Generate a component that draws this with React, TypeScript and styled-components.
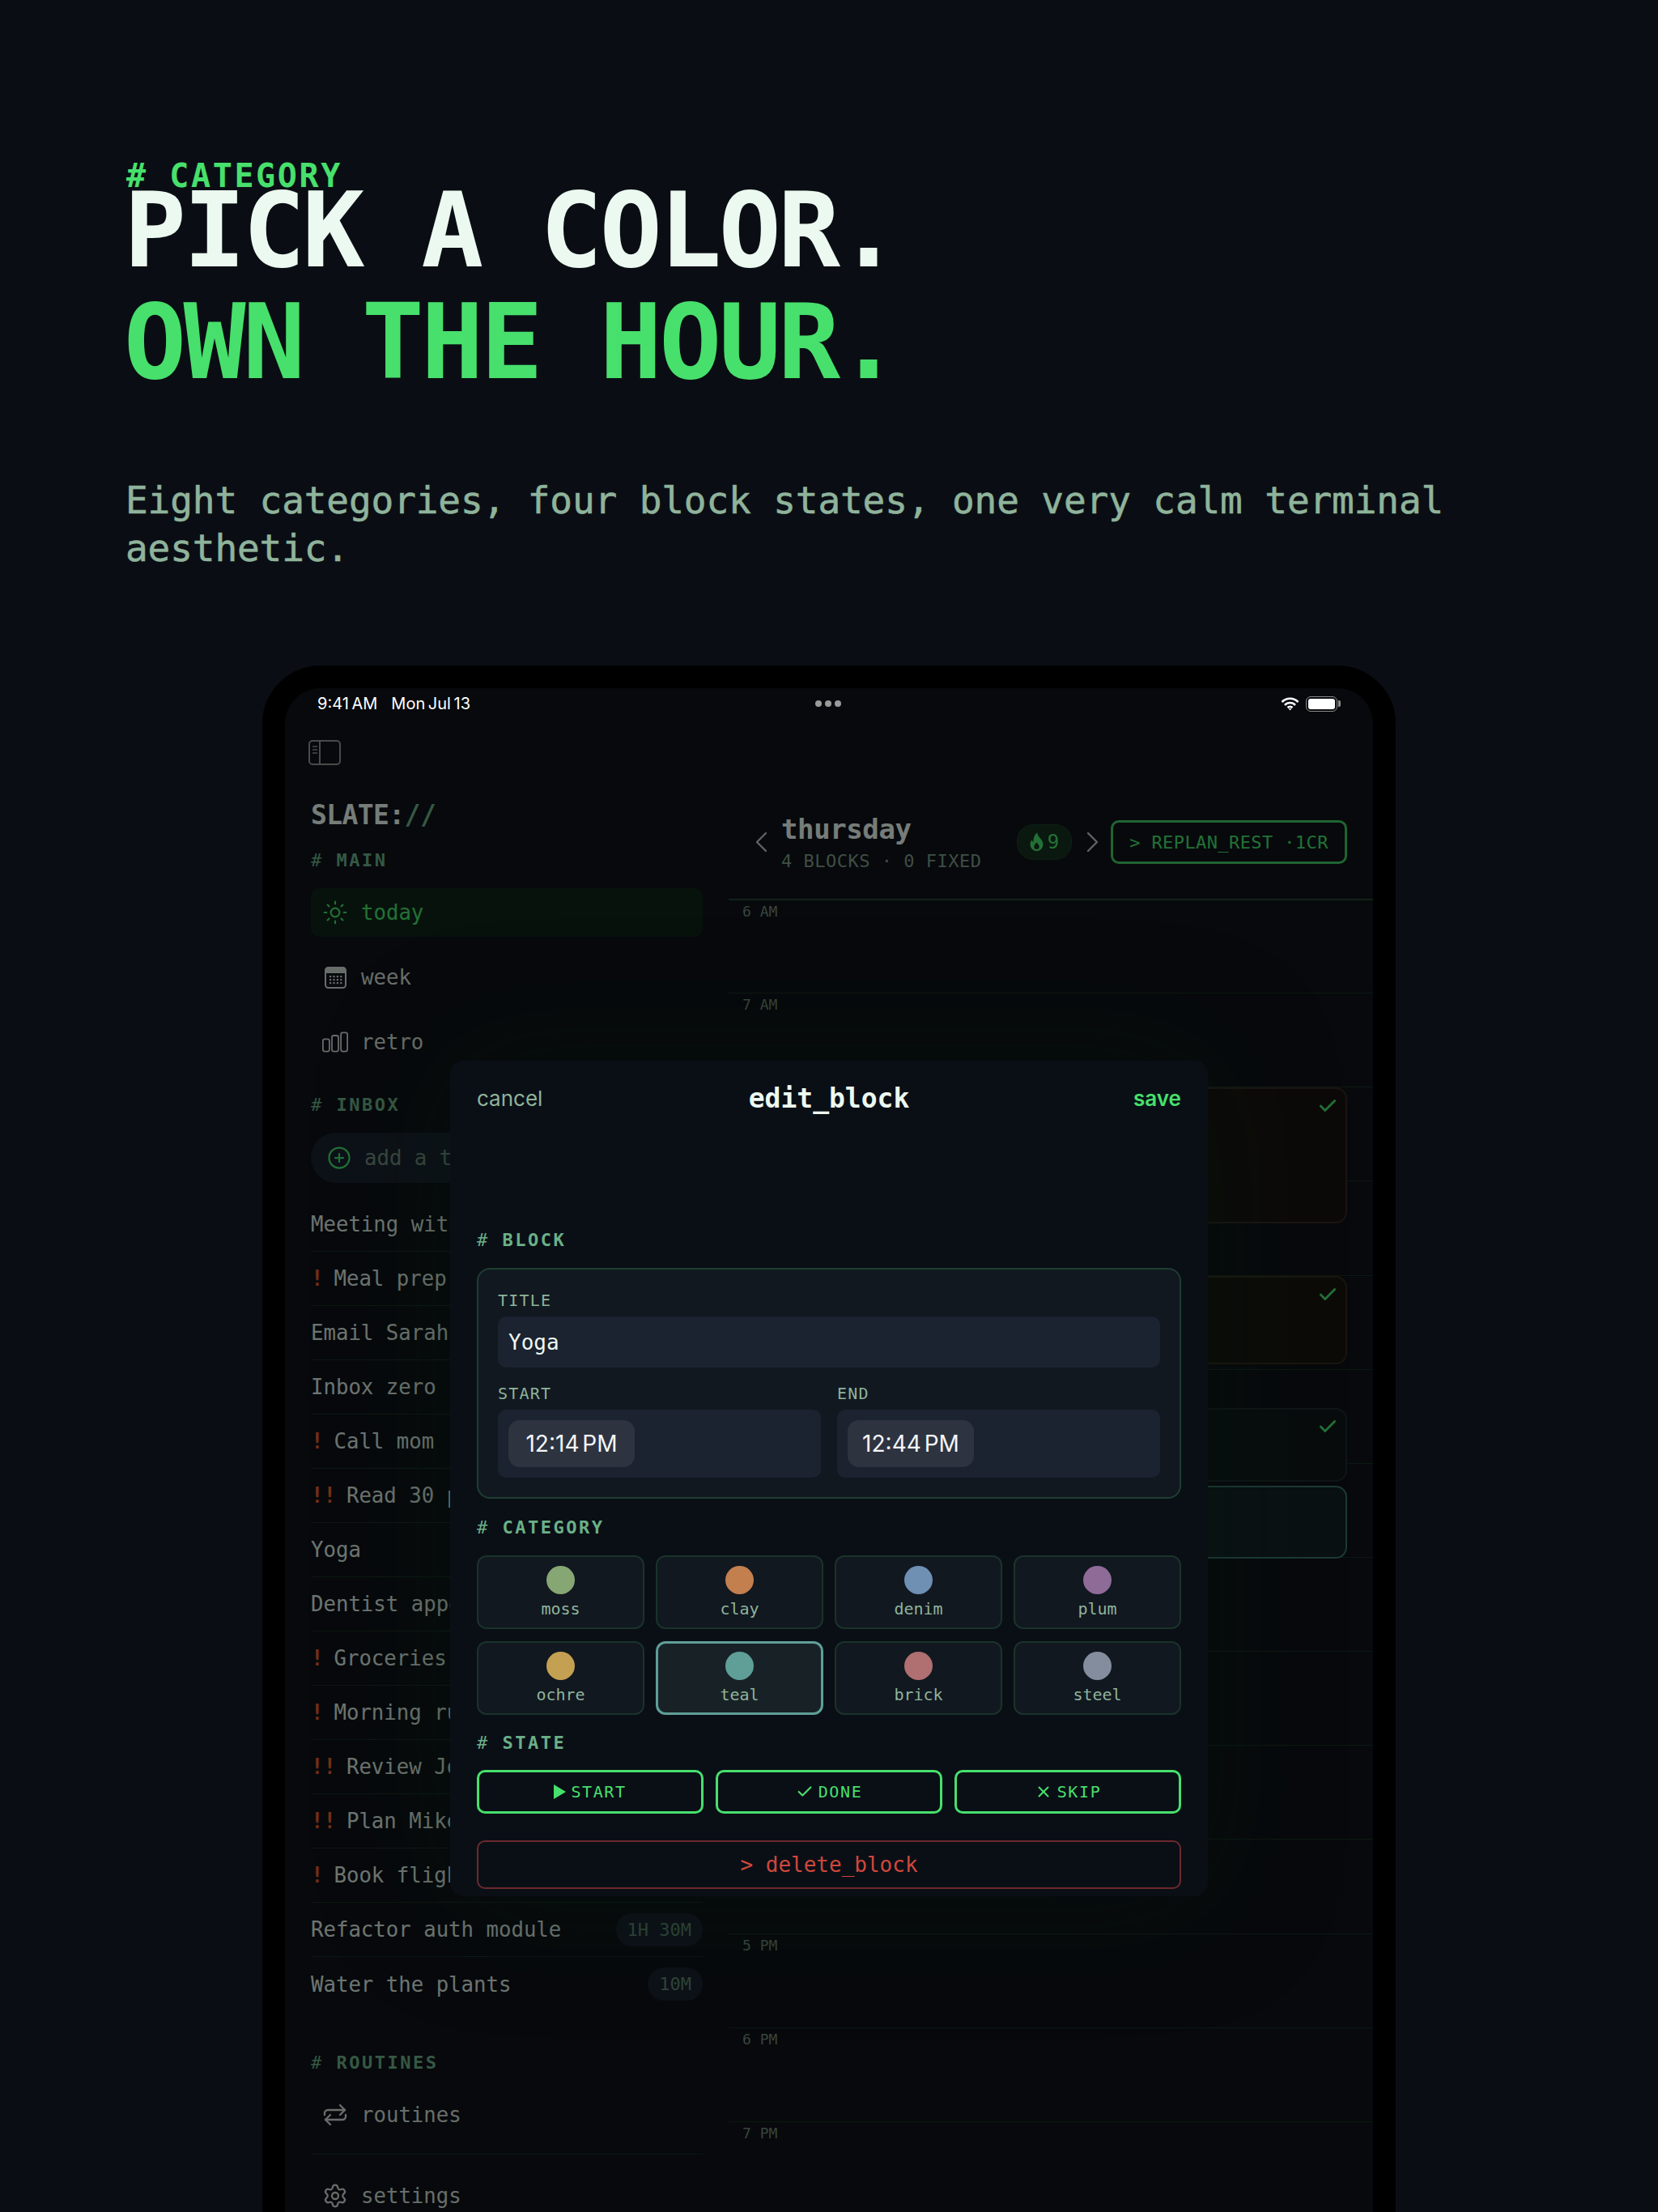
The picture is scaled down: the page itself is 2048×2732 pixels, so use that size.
import styled, { createGlobalStyle } from 'styled-components';
import { Check, CirclePlus, Settings, Sun, X } from 'lucide-react';

const MONO = '"DejaVu Sans Mono", "Liberation Mono", monospace';
const SANS = 'Inter, "Noto Sans", sans-serif';

const GlobalStyle = createGlobalStyle`
  html, body {
    margin: 0;
    background: #0a0e14;
  }
  * {
    box-sizing: border-box;
  }
`;

const Page = styled.div`
  height: 2732px;
  overflow: hidden;
  background: #0a0e14;
  font-family: ${MONO};
  padding-top: 197px;
`;

const Hero = styled.header`
  padding: 0 156px;
`;

const Eyebrow = styled.div`
  font-size: 40px;
  line-height: 40px;
  font-weight: 700;
  letter-spacing: 2.6px;
  color: #47e06c;
`;

const Headline = styled.h1`
  margin: -21px 0 0 -3px;
  font-size: 128px;
  line-height: 138px;
  font-weight: 700;
  letter-spacing: -3.6px;
  color: #ecf9f0;
`;

const HeadlineAccent = styled.span`
  display: block;
  color: #47e06c;
`;

const Lead = styled.p`
  margin: 97px 0 0 -1px;
  font-size: 46px;
  line-height: 59px;
  letter-spacing: -0.1px;
  -webkit-text-stroke: 0.6px #8fb39b;
  color: #8fb39b;
`;

const Device = styled.div`
  width: 1400px;
  height: 2000px;
  margin: 115px auto 0;
  border: 28px solid #000;
  border-radius: 72px;
  background: #000;
`;

const Screen = styled.div`
  position: relative;
  height: 100%;
  border-radius: 44px;
  overflow: hidden;
  background: #0e1219;
`;

const StatusBar = styled.div`
  position: relative;
  z-index: 3;
  display: grid;
  grid-template-columns: 1fr auto 1fr;
  align-items: center;
  height: 38px;
  padding: 0 44px 0 40px;
  font-family: ${SANS};
  font-size: 20px;
  font-weight: 400;
  word-spacing: -2px;
  color: #fff;
`;

const StatusLeft = styled.div`
  display: flex;
  gap: 17px;
`;

const StatusDots = styled.div`
  display: flex;
  gap: 4px;
  margin-left: 2px;
`;

const StatusDot = styled.span`
  width: 8px;
  height: 8px;
  border-radius: 50%;
  background: #9a9a9a;
`;

const StatusRight = styled.div`
  display: flex;
  justify-content: flex-end;
  align-items: center;
  gap: 8px;
`;

const Battery = styled.div`
  position: relative;
  width: 39px;
  height: 19px;
  padding: 2px;
  border: 1.5px solid #8a8a8a;
  border-radius: 6px;

  &::before {
    content: '';
    display: block;
    height: 100%;
    border-radius: 3px;
    background: #fff;
  }

  &::after {
    content: '';
    position: absolute;
    top: 4px;
    right: -5px;
    width: 3px;
    height: 8px;
    border-radius: 0 2px 2px 0;
    background: #8a8a8a;
  }
`;

const Body = styled.div`
  display: grid;
  grid-template-columns: 548px 1fr;
`;

const Sidebar = styled.aside`
  padding: 26px 32px 0;
`;

const ToggleIcon = styled.svg`
  display: block;
  width: 40px;
  height: 31px;
  margin-left: -3px;
`;

const Logo = styled.div`
  margin-top: 42px;
  font-size: 33px;
  line-height: 40px;
  font-weight: 700;
  letter-spacing: -0.6px;
  color: #ecf9f0;
`;

const LogoSlash = styled.span`
  color: #6bb088;
`;

const SectionLabel = styled.div<{ $top: number }>`
  margin-top: ${(p) => p.$top}px;
  font-size: 22px;
  line-height: 28px;
  font-weight: 700;
  letter-spacing: 2.5px;
  color: #6bb088;
`;

const Hash = styled.span`
  font-weight: 400;
`;

const NavList = styled.nav`
  display: flex;
  flex-direction: column;
  gap: 20px;
  margin-top: 20px;
`;

const NavItem = styled.div<{ $active?: boolean }>`
  display: flex;
  align-items: center;
  gap: 16px;
  height: 60px;
  padding-left: 14px;
  border-radius: 10px;
  font-size: 25.7px;
  color: ${(p) => (p.$active ? '#47e06c' : '#cfdcd3')};
  background: ${(p) => (p.$active ? '#0f2418' : 'transparent')};
`;

const NavIcon = styled.span`
  display: flex;
  justify-content: center;
  width: 32px;
  color: inherit;
`;

const AddTask = styled.div`
  display: flex;
  align-items: center;
  gap: 16px;
  height: 62px;
  margin-top: 20px;
  padding-left: 20px;
  border-radius: 31px;
  background: #1a2230;
  font-size: 25.7px;
  color: #74907f;
`;

const TaskList = styled.ul`
  margin: 18px 0 0;
  padding: 0;
  list-style: none;
`;

const TaskRow = styled.li`
  display: flex;
  align-items: center;
  justify-content: space-between;
  height: 67px;
  border-bottom: 1px solid #1a3325;
  font-size: 25.7px;
  color: #dcebe2;
  white-space: nowrap;

  &:last-child {
    border-bottom: none;
  }
`;

const TaskName = styled.span`
  display: flex;
  gap: 13px;
`;

const Flag = styled.span`
  font-weight: 700;
  color: #e4622f;
`;

const Duration = styled.span`
  padding: 0 14px;
  height: 41px;
  line-height: 41px;
  border-radius: 20px;
  background: #1a2230;
  font-size: 22px;
  color: #5f8a70;
`;

const SidebarRule = styled.div`
  height: 1px;
  margin: 18px 0 21px;
  background: #1a3325;
`;

const Main = styled.main`
  display: flex;
  flex-direction: column;
`;

const DayHeader = styled.div`
  display: flex;
  align-items: center;
  height: 222px;
  padding: 125px 32px 43px 30px;
`;

const Chevron = styled.svg`
  flex: none;
  width: 20px;
  height: 28px;
  color: #bcc9c0;
`;

const DayTitle = styled.div`
  flex: 1;
  margin-left: 15px;
`;

const DayName = styled.div`
  font-size: 34px;
  line-height: 44px;
  font-weight: 700;
  letter-spacing: -0.4px;
  color: #ecf9f0;
`;

const DayMeta = styled.div`
  margin-top: 3px;
  font-size: 22px;
  line-height: 30px;
  letter-spacing: 0.5px;
  color: #7e9c89;
`;

const Streak = styled.div`
  display: flex;
  align-items: center;
  justify-content: center;
  gap: 5px;
  width: 68px;
  height: 44px;
  margin-right: 16px;
  border: 1px solid #1c3f2a;
  border-radius: 20px;
  background: #14301f;
  font-size: 24px;
  color: #47e06c;
`;

const ReplanButton = styled.button`
  width: 292px;
  height: 54px;
  margin-left: 12px;
  padding: 0;
  border: 3px solid #3fc962;
  border-radius: 10px;
  background: none;
  font-family: ${MONO};
  font-size: 22px;
  letter-spacing: 0.4px;
  color: #47e06c;
`;

const Timeline = styled.div`
  position: relative;
`;

const HourRow = styled.div<{ $first?: boolean }>`
  height: 116.15px;
  padding: 3px 0 0 17px;
  border-top: ${(p) => (p.$first ? '2px solid #23442f' : '1px solid #1a3325')};
  font-size: 18px;
  line-height: 22px;
  color: #6f8a78;
`;

const Block = styled.div<{ $top: number; $height: number; $tone: string; $edge: string }>`
  position: absolute;
  top: ${(p) => p.$top}px;
  left: 60px;
  right: 32px;
  height: ${(p) => p.$height}px;
  display: flex;
  justify-content: flex-end;
  padding: 8px 9px;
  border: 2px solid ${(p) => p.$edge};
  border-radius: 14px;
  background: ${(p) => p.$tone};
  color: #47e06c;
`;

const Scrim = styled.div`
  position: absolute;
  inset: 0;
  z-index: 1;
  background: rgba(0, 0, 0, 0.5);
`;

const Sheet = styled.section`
  position: absolute;
  z-index: 2;
  top: 460px;
  left: 204px;
  width: 936px;
  height: 1032px;
  padding: 0 33px;
  border-radius: 16px;
  background: #0a0f16;
  box-shadow: 0 0 160px rgba(6, 30, 12, 0.35);
`;

const SheetHeader = styled.div`
  display: grid;
  grid-template-columns: 1fr auto 1fr;
  align-items: center;
  height: 92px;
  font-family: ${SANS};
  font-size: 26px;
`;

const SheetCancel = styled.span`
  color: #8fb39b;
`;

const SheetTitle = styled.span`
  font-family: ${MONO};
  font-size: 33px;
  font-weight: 700;
  color: #ecf9f0;
`;

const SheetSave = styled.span`
  justify-self: end;
  font-weight: 600;
  color: #47e06c;
`;

const FormCard = styled.div`
  margin-top: 20px;
  padding: 25px 24px 24px;
  border: 2px solid #1f3d30;
  border-radius: 16px;
  background: #111820;
`;

const FieldLabel = styled.div`
  font-size: 20px;
  line-height: 26px;
  letter-spacing: 1.2px;
  color: #8fb39b;
`;

const TitleInput = styled.div`
  display: flex;
  align-items: center;
  height: 63px;
  margin: 7px 0 19px;
  padding-left: 13px;
  border-radius: 10px;
  background: #1b2230;
  font-size: 26px;
  color: #ecf9f0;
`;

const TimeFields = styled.div`
  display: grid;
  grid-template-columns: 1fr 1fr;
  gap: 20px;
`;

const TimeBox = styled.div`
  display: flex;
  align-items: center;
  height: 84px;
  margin-top: 7px;
  padding-left: 13px;
  border-radius: 10px;
  background: #1b2230;
`;

const TimePill = styled.div`
  display: flex;
  align-items: center;
  justify-content: center;
  width: 156px;
  height: 58px;
  border-radius: 14px;
  background: #2e3340;
  font-family: ${SANS};
  font-size: 28px;
  word-spacing: -4px;
  color: #f4f6f8;
`;

const CategoryGrid = styled.div`
  display: grid;
  grid-template-columns: repeat(4, 1fr);
  gap: 15px 14px;
  margin-top: 20px;
`;

const CategoryTile = styled.div<{ $selected?: boolean; $ring: string }>`
  display: flex;
  flex-direction: column;
  align-items: center;
  height: 91px;
  padding-top: ${(p) => (p.$selected ? 10 : 11)}px;
  border: ${(p) => (p.$selected ? `3px solid ${p.$ring}` : '2px solid #1a3329')};
  border-radius: 12px;
  background: ${(p) => (p.$selected ? '#182226' : '#111820')};
`;

const CategoryDot = styled.span<{ $color: string }>`
  width: 35px;
  height: 35px;
  border-radius: 50%;
  background: ${(p) => p.$color};
`;

const CategoryName = styled.span`
  margin-top: 5px;
  font-size: 20px;
  line-height: 26px;
  color: #8fb39b;
`;

const StateRow = styled.div`
  display: grid;
  grid-template-columns: repeat(3, 1fr);
  gap: 15px;
  margin-top: 19px;
`;

const StateButton = styled.button`
  display: flex;
  align-items: center;
  justify-content: center;
  gap: 6px;
  height: 54px;
  padding: 0;
  border: 3px solid #47e06c;
  border-radius: 10px;
  background: none;
  font-family: ${MONO};
  font-size: 20px;
  letter-spacing: 1.6px;
  color: #47e06c;
`;

const DeleteButton = styled.button`
  display: block;
  width: 100%;
  height: 60px;
  margin-top: 33px;
  padding: 0;
  border: 2px solid #6b2a2c;
  border-radius: 10px;
  background: none;
  font-family: ${MONO};
  font-size: 26px;
  color: #d0473c;
`;

const tasks: { name: string; flag?: string; time?: string }[] = [
  { name: 'Meeting with Jordan' },
  { name: 'Meal prep', flag: '!' },
  { name: 'Email Sarah' },
  { name: 'Inbox zero' },
  { name: 'Call mom', flag: '!' },
  { name: 'Read 30 pages', flag: '!!' },
  { name: 'Yoga' },
  { name: 'Dentist appointment' },
  { name: 'Groceries', flag: '!' },
  { name: 'Morning run', flag: '!' },
  { name: 'Review Jordan', flag: '!!' },
  { name: 'Plan Mike party', flag: '!!' },
  { name: 'Book flights', flag: '!' },
  { name: 'Refactor auth module', time: '1H 30M' },
  { name: 'Water the plants', time: '10M' },
];

const hours = [
  '6 AM', '7 AM', '8 AM', '9 AM', '10 AM', '11 AM', '12 PM', '1 PM',
  '2 PM', '3 PM', '4 PM', '5 PM', '6 PM', '7 PM',
];

const categories = [
  { name: 'moss', color: '#86a673' },
  { name: 'clay', color: '#c47f4f' },
  { name: 'denim', color: '#6f8fb3' },
  { name: 'plum', color: '#8f6b98' },
  { name: 'ochre', color: '#c4a052' },
  { name: 'teal', color: '#5f9f98', selected: true },
  { name: 'brick', color: '#b06f70' },
  { name: 'steel', color: '#848d9e' },
];

const blocks = [
  { top: 233, height: 168, tone: '#181513', edge: '#342a22', done: true },
  { top: 466, height: 109, tone: '#181611', edge: '#362d1e', done: true },
  { top: 629, height: 91, tone: '#11181b', edge: '#202b2e', done: true },
  { top: 725, height: 90, tone: '#142226', edge: '#38746c', done: false },
];

const WeekIcon = () => (
  <svg width="27" height="27" viewBox="0 0 27 27">
    <rect x="1" y="1" width="25" height="25" rx="3.5" fill="none" stroke="#cfdcd3" strokeWidth="2" />
    <path d="M1 5a4 4 0 0 1 4-4h17a4 4 0 0 1 4 4v3H1z" fill="#cfdcd3" />
    {[0, 1, 2, 3].map((c) =>
      [0, 1, 2].map((r) => (
        <rect key={`${c}${r}`} x={6 + c * 4.4} y={11 + r * 4} width="2.2" height="2.2" fill="#cfdcd3" />
      )),
    )}
  </svg>
);

const RetroIcon = () => (
  <svg width="36" height="28" viewBox="0 0 36 28" fill="none" stroke="#cfdcd3" strokeWidth="2">
    <rect x="1" y="10" width="9" height="17" rx="2.5" />
    <rect x="13.5" y="5" width="9" height="22" rx="2.5" />
    <rect x="26" y="1" width="9" height="26" rx="2.5" />
  </svg>
);

const RoutinesIcon = () => (
  <svg width="30" height="28" viewBox="0 0 30 28" fill="none" stroke="#cfdcd3" strokeWidth="2.4" strokeLinecap="round" strokeLinejoin="round">
    <path d="M2 14v-2a4 4 0 0 1 4-4h21" />
    <path d="M21 2l6 6-6 6" />
    <path d="M28 14v2a4 4 0 0 1-4 4H3" />
    <path d="M9 26l-6-6 6-6" />
  </svg>
);

const FlameIcon = () => (
  <svg width="17" height="24" viewBox="0 0 16 22">
    <path
      fillRule="evenodd"
      d="M8.5 0c.6 3.2 2.2 4.9 4 7 1.600 1.900 3 3.900 3 7a7.500 7.500 0 0 1-15 0c0-2.300.9-4 2-5.500.3 1.300.9 2.100 1.800 2.700C3.800 7.300 5.200 3 8.500 0zM8 11.500c-1.800 1.800-3 3.200-3 4.900a3 3 0 0 0 6 0c0-1.700-1.300-3.100-3-4.900z"
      fill="currentColor"
    />
  </svg>
);

const ChevronLeft = () => (
  <Chevron viewBox="0 0 20 28" fill="none" stroke="currentColor" strokeWidth="2.4" strokeLinecap="round" strokeLinejoin="round">
    <path d="M16 3L5 14l11 11" />
  </Chevron>
);

const ChevronRight = () => (
  <Chevron viewBox="0 0 20 28" fill="none" stroke="currentColor" strokeWidth="2.4" strokeLinecap="round" strokeLinejoin="round">
    <path d="M4 3l11 11L4 25" />
  </Chevron>
);

const Section = ({ children, top }: { children: string; top: number }) => (
  <SectionLabel $top={top}>
    <Hash># </Hash>
    {children}
  </SectionLabel>
);

const App = () => (
  <Page>
    <GlobalStyle />
    <Hero>
      <Eyebrow># CATEGORY</Eyebrow>
      <Headline>
        PICK A COLOR.
        <HeadlineAccent>OWN THE HOUR.</HeadlineAccent>
      </Headline>
      <Lead>Eight categories, four block states, one very calm terminal aesthetic.</Lead>
    </Hero>

    <Device>
      <Screen>
        <StatusBar>
          <StatusLeft>
            <span>9:41 AM</span>
            <span>Mon Jul 13</span>
          </StatusLeft>
          <StatusDots>
            <StatusDot />
            <StatusDot />
            <StatusDot />
          </StatusDots>
          <StatusRight>
            <svg width="23" height="17" viewBox="0 0 23 17" fill="none" stroke="#fff" strokeWidth="2.6">
              <path d="M1.500 6a14 14 0 0 1 20 0" />
              <path d="M5 9.800a9 9 0 0 1 13 0" />
              <path d="M8.500 13a4.300 4.300 0 0 1 6 0" />
              <path d="M9.500 14l2 2.500 2-2.500z" fill="#fff" strokeWidth="0" />
            </svg>
            <Battery />
          </StatusRight>
        </StatusBar>

        <Body>
          <Sidebar>
            <ToggleIcon viewBox="0 0 40 31" fill="none" stroke="#8d9993" strokeWidth="2">
              <rect x="1" y="1" width="38" height="29" rx="4" />
              <path d="M14 1v29" />
              <path d="M5 8h6M5 12h6M5 16h6" strokeWidth="1.500" />
            </ToggleIcon>
            <Logo>
              SLATE:<LogoSlash>//</LogoSlash>
            </Logo>
            <Section top={22}>MAIN</Section>
            <NavList>
              <NavItem $active>
                <NavIcon>
                  <Sun size={32} strokeWidth={1.6} />
                </NavIcon>
                today
              </NavItem>
              <NavItem>
                <NavIcon>
                  <WeekIcon />
                </NavIcon>
                week
              </NavItem>
              <NavItem>
                <NavIcon>
                  <RetroIcon />
                </NavIcon>
                retro
              </NavItem>
            </NavList>
            <Section top={34}>INBOX</Section>
            <AddTask>
              <CirclePlus size={30} strokeWidth={1.8} color="#47e06c" />
              add a task
            </AddTask>
            <TaskList>
              {tasks.map((task) => (
                <TaskRow key={task.name}>
                  <TaskName>
                    {task.flag && <Flag>{task.flag}</Flag>}
                    {task.name}
                  </TaskName>
                  {task.time && <Duration>{task.time}</Duration>}
                </TaskRow>
              ))}
            </TaskList>
            <Section top={50}>ROUTINES</Section>
            <NavList>
              <NavItem>
                <NavIcon>
                  <RoutinesIcon />
                </NavIcon>
                routines
              </NavItem>
            </NavList>
            <SidebarRule />
            <NavItem>
              <NavIcon>
                <Settings size={32} strokeWidth={1.7} />
              </NavIcon>
              settings
            </NavItem>
          </Sidebar>

          <Main>
            <DayHeader>
              <ChevronLeft />
              <DayTitle>
                <DayName>thursday</DayName>
                <DayMeta>4 BLOCKS · 0 FIXED</DayMeta>
              </DayTitle>
              <Streak>
                <FlameIcon />9
              </Streak>
              <ChevronRight />
              <ReplanButton>&gt; REPLAN_REST ·1CR</ReplanButton>
            </DayHeader>
            <Timeline>
              {hours.map((hour, i) => (
                <HourRow key={hour} $first={i === 0}>
                  {hour}
                </HourRow>
              ))}
              {blocks.map((block) => (
                <Block key={block.top} $top={block.top} $height={block.height} $tone={block.tone} $edge={block.edge}>
                  {block.done && <Check size={26} strokeWidth={2.6} />}
                </Block>
              ))}
            </Timeline>
          </Main>
        </Body>

        <Scrim />

        <Sheet>
          <SheetHeader>
            <SheetCancel>cancel</SheetCancel>
            <SheetTitle>edit_block</SheetTitle>
            <SheetSave>save</SheetSave>
          </SheetHeader>

          <Section top={116}>BLOCK</Section>
          <FormCard>
            <FieldLabel>TITLE</FieldLabel>
            <TitleInput>Yoga</TitleInput>
            <TimeFields>
              <div>
                <FieldLabel>START</FieldLabel>
                <TimeBox>
                  <TimePill>12:14 PM</TimePill>
                </TimeBox>
              </div>
              <div>
                <FieldLabel>END</FieldLabel>
                <TimeBox>
                  <TimePill>12:44 PM</TimePill>
                </TimeBox>
              </div>
            </TimeFields>
          </FormCard>

          <Section top={22}>CATEGORY</Section>
          <CategoryGrid>
            {categories.map((category) => (
              <CategoryTile key={category.name} $selected={category.selected} $ring={category.color}>
                <CategoryDot $color={category.color} />
                <CategoryName>{category.name}</CategoryName>
              </CategoryTile>
            ))}
          </CategoryGrid>

          <Section top={21}>STATE</Section>
          <StateRow>
            <StateButton>
              <svg width="15" height="18" viewBox="0 0 15 18">
                <path d="M0 0l15 9-15 9z" fill="currentColor" />
              </svg>
              START
            </StateButton>
            <StateButton>
              <Check size={22} strokeWidth={2.4} />
              DONE
            </StateButton>
            <StateButton>
              <X size={22} strokeWidth={2.2} />
              SKIP
            </StateButton>
          </StateRow>

          <DeleteButton>&gt; delete_block</DeleteButton>
        </Sheet>
      </Screen>
    </Device>
  </Page>
);

export default App;
